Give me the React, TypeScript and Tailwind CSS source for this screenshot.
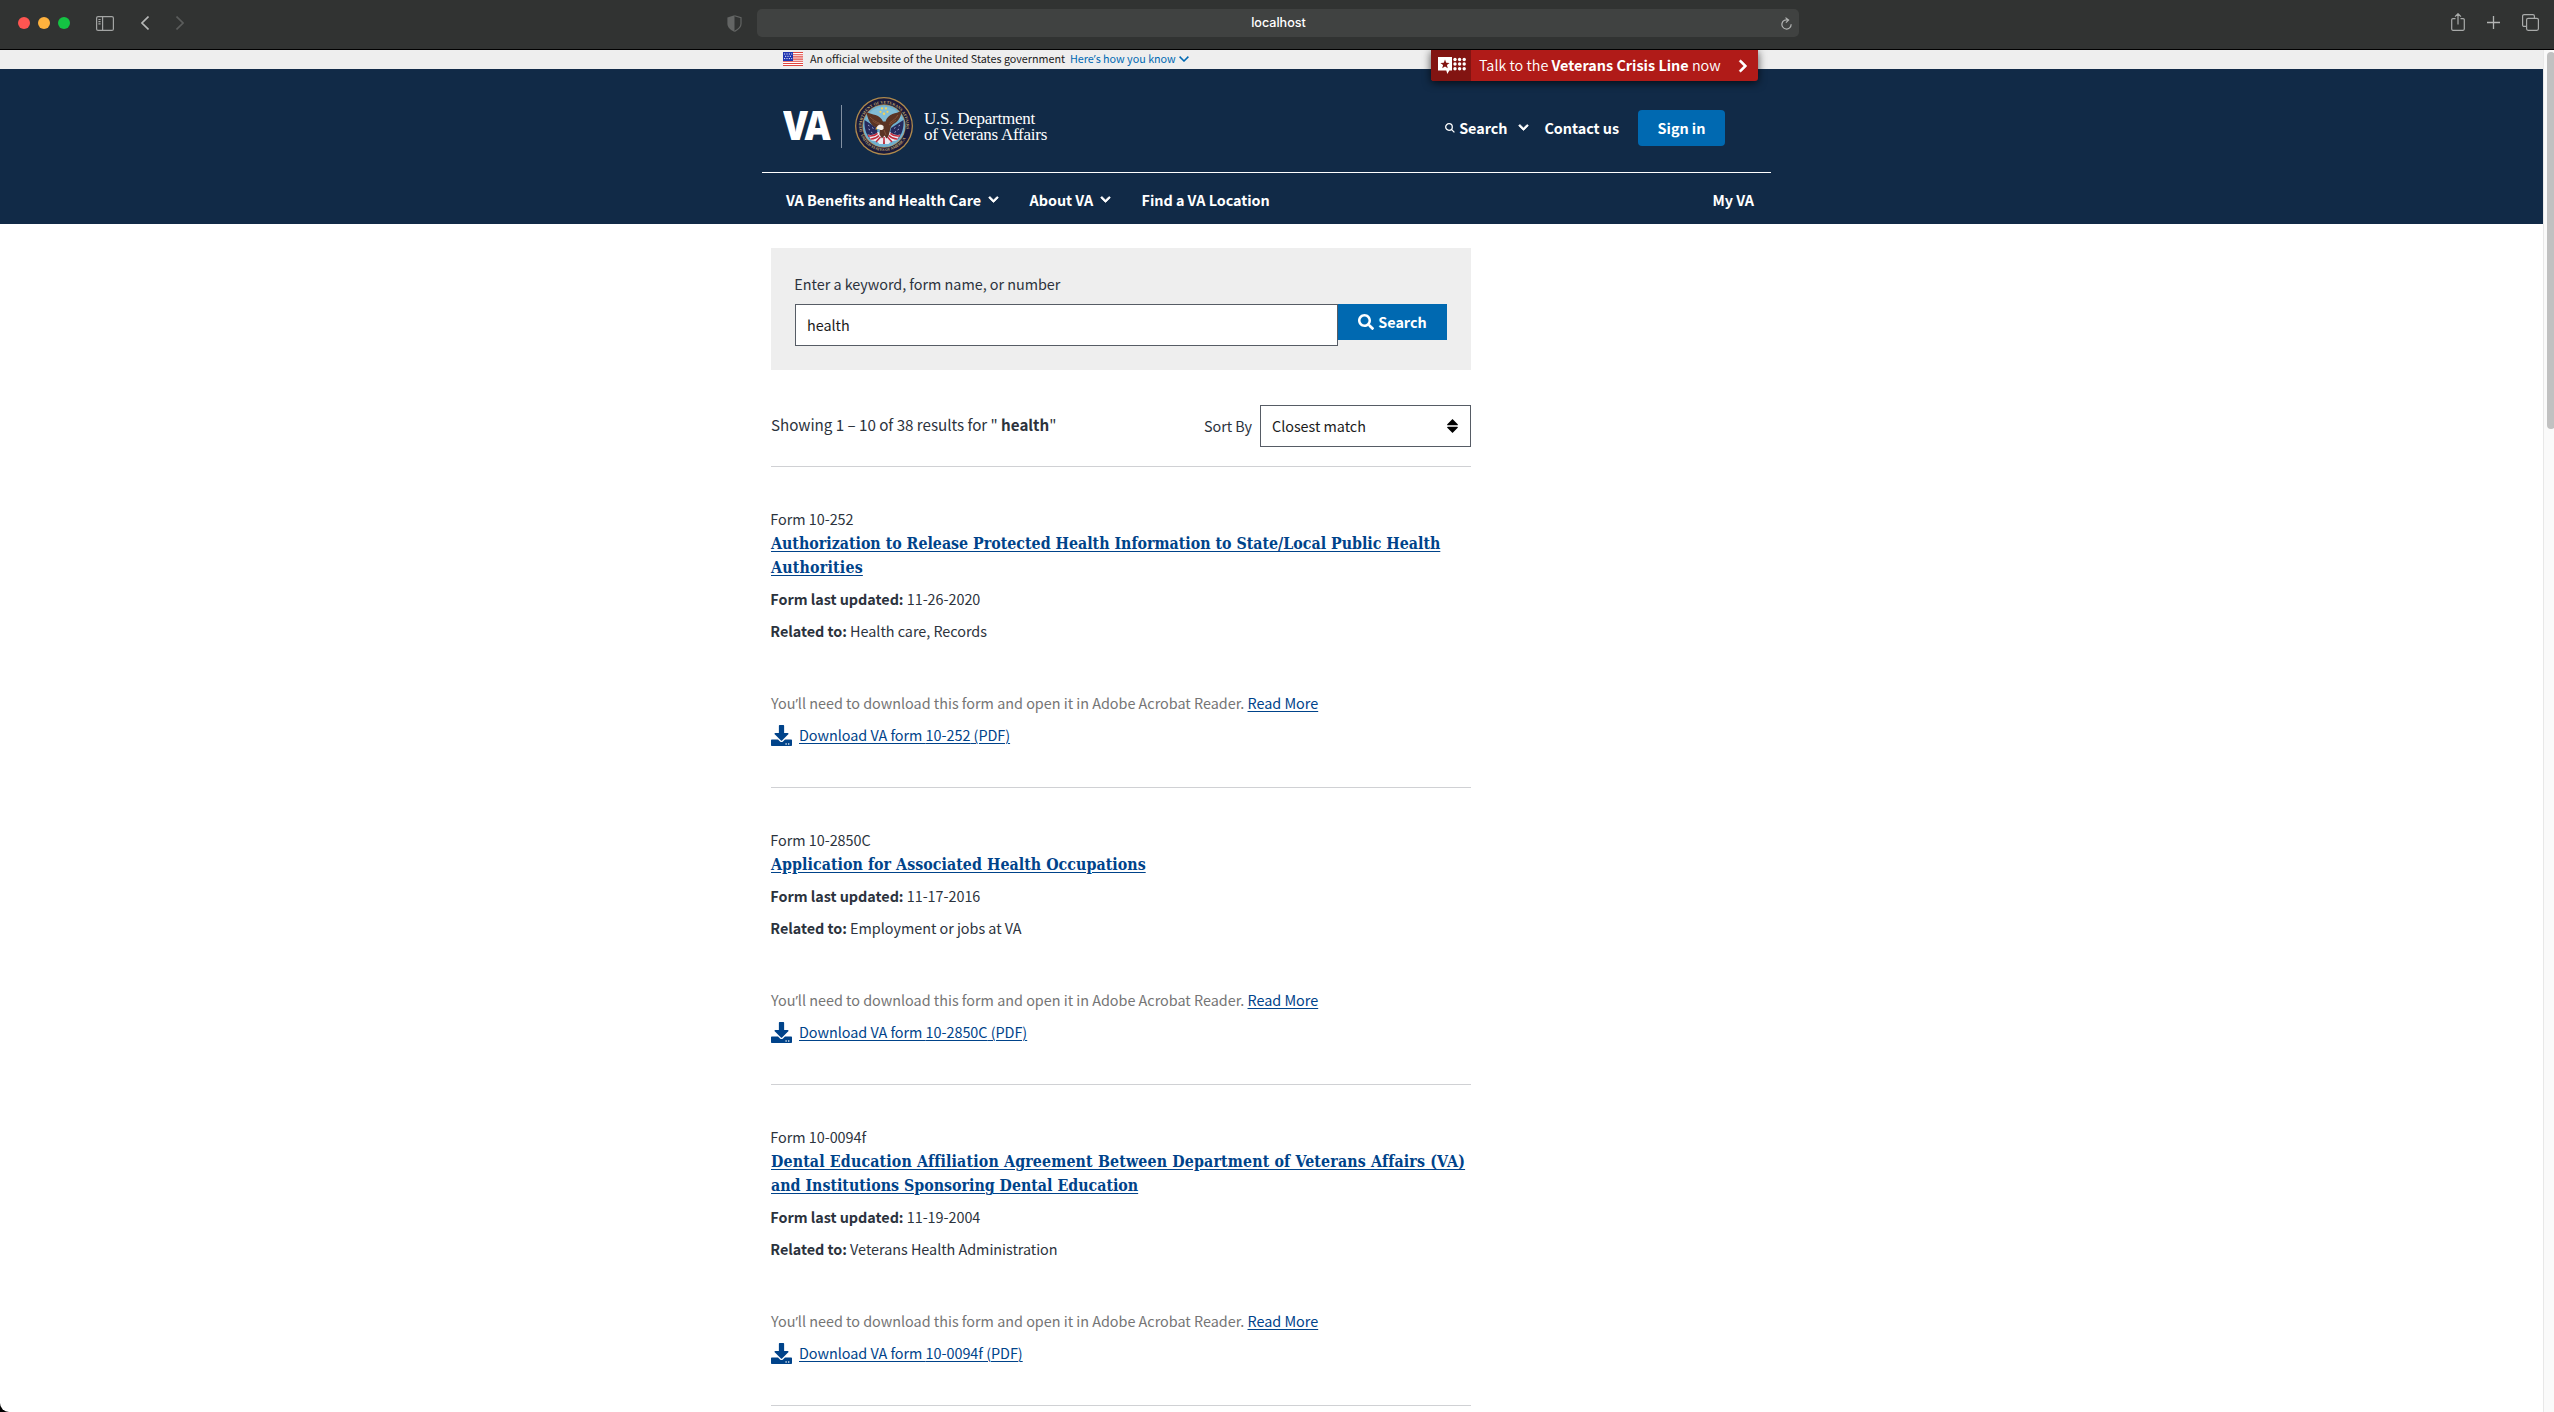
import type { ReactNode } from "react";
import { FaChevronDown, FaChevronRight, FaDownload, FaSearch } from "react-icons/fa";

type FormResult = {
  id: string;
  title: { text: string; tracking: string }[];
  updated: string;
  related: string;
};

const RESULTS: FormResult[] = [
  {
    id: "10-252",
    title: [
      {
        text: "Authorization to Release Protected Health Information to State/Local Public Health",
        tracking: "tracking-normal",
      },
      { text: "Authorities", tracking: "tracking-[0.2px]" },
    ],
    updated: "11-26-2020",
    related: "Health care, Records",
  },
  {
    id: "10-2850C",
    title: [{ text: "Application for Associated Health Occupations", tracking: "tracking-[0.05px]" }],
    updated: "11-17-2016",
    related: "Employment or jobs at VA",
  },
  {
    id: "10-0094f",
    title: [
      {
        text: "Dental Education Affiliation Agreement Between Department of Veterans Affairs (VA)",
        tracking: "tracking-[0.15px]",
      },
      { text: "and Institutions Sponsoring Dental Education", tracking: "tracking-normal" },
    ],
    updated: "11-19-2004",
    related: "Veterans Health Administration",
  },
];

/* The CJK face draws a full-width apostrophe, so it is taken from another family. */
function Apostrophe() {
  return <span className="leading-none [font-family:'Open_Sans',sans-serif]">’</span>;
}

function BrowserBar() {
  return (
    <div className="flex h-[50px] shrink-0 items-start border-b border-black bg-[#313332]">
      <div className="flex w-[757px] items-center pt-[9px] pl-[18px]">
        <div className="flex h-7 items-center gap-2">
          <span className="size-3 rounded-full bg-[#ff5551]" />
          <span className="size-3 rounded-full bg-[#ffb23e]" />
          <span className="size-3 rounded-full bg-[#14c343]" />
        </div>
        <svg className="ml-[26px] h-[15px] w-[18px]" viewBox="0 0 18 15" fill="none" stroke="#a3a5a4" strokeWidth="1.2">
          <rect x="0.6" y="0.6" width="16.8" height="13.8" rx="1.5" />
          <path d="M6.6 0.6v13.8M2.4 3.5h2.2M2.4 5.7h2.2M2.4 7.9h2.2" />
        </svg>
        <svg className="ml-[27px] h-[14px] w-2" viewBox="0 0 8 14" fill="none" stroke="#b6b8b7" strokeWidth="1.6">
          <path d="M7.5 0.5 1 7l6.5 6.5" />
        </svg>
        <svg className="ml-[27px] h-[14px] w-2" viewBox="0 0 8 14" fill="none" stroke="#5b5d5c" strokeWidth="1.6">
          <path d="M0.5 0.5 7 7 0.5 13.5" />
        </svg>
        <svg className="mr-[15px] ml-auto h-[17px] w-[15px]" viewBox="0 0 15 17" fill="none">
          <path d="M7.5.8 14 2.8v6c0 3-2.5 5.6-6.5 7.6" stroke="#636564" strokeWidth="1.2" />
          <path d="M7.5.2.4 2.5v6.3c0 3.3 2.6 6 7.1 8.1z" fill="#636564" />
        </svg>
      </div>
      <div className="mt-[9px] flex h-7 w-[1042px] items-center rounded-[5px] bg-[#404241] pr-[7px]">
        <span className="flex-1 pl-[19px] text-center text-[12.6px] font-medium text-white [font-family:Inter,sans-serif]">localhost</span>
        <svg className="h-[13px] w-[11px]" viewBox="0 0 11 13" fill="none" stroke="#b3b5b4" strokeWidth="1.2">
          <path d="M7.3 3.2A4.6 4.6 0 1 0 10.1 7.3M4.5.6 7.6 3.1 4.9 5.6" />
        </svg>
      </div>
      <div className="ml-auto flex items-center pt-[13px] pr-[15px]">
        <svg className="h-[18px] w-[14px]" viewBox="0 0 14 18" fill="none" stroke="#a9abaa" strokeWidth="1.2">
          <path d="M4.5 5.6H1.9a1.2 1.2 0 0 0-1.2 1.2v9.3a1.2 1.2 0 0 0 1.2 1.2h10.2a1.2 1.2 0 0 0 1.2-1.2V6.8a1.2 1.2 0 0 0-1.2-1.2H9.5M7 11.5V.9M4 3.6 7 .7l3 2.9" />
        </svg>
        <svg className="ml-[22px] size-[13px]" viewBox="0 0 13 13" stroke="#b3b5b4" strokeWidth="1.3">
          <path d="M6.5 0v13M0 6.5h13" />
        </svg>
        <svg className="ml-[22px] h-[17px] w-[17px]" viewBox="0 0 17 17" fill="none" stroke="#a9abaa" strokeWidth="1.2">
          <rect x="4.6" y="4.3" width="11.8" height="12" rx="1.5" />
          <path d="M4.3 12.4H2.1A1.5 1.5 0 0 1 .6 10.9V2.1A1.5 1.5 0 0 1 2.1.6h8.8a1.5 1.5 0 0 1 1.5 1.5v1.8" />
        </svg>
      </div>
    </div>
  );
}

function Flag() {
  return (
    <svg className="h-[14px] w-5" viewBox="0 0 20 14">
      <rect width="20" height="14" fill="#fff" />
      <path d="M0 .5h20M0 2.7h20M0 4.9h20M0 7.1h20M0 9.3h20M0 11.5h20M0 13.5h20" stroke="#e0463f" strokeWidth="1.1" />
      <rect width="10" height="9" fill="#1e33b1" />
      <path d="M1 2h1.2m1.2 0h1.2m1.2 0h1.2m1.2 0h1M2 4.3h1.2m1.2 0h1.2m1.2 0h1.2M1 6.6h1.2m1.2 0h1.2m1.2 0h1.2m1.2 0h1" stroke="#fff" strokeWidth="0.9" />
    </svg>
  );
}

function Seal() {
  return (
    <svg className="size-[58px]" viewBox="0 0 58 58">
      <defs>
        <path id="ring-top" d="M7.3 34.5A22.4 22.4 0 1 1 50.7 34.5" />
        <path id="ring-bottom" d="M5.7 38A25 25 0 0 0 52.3 38" />
      </defs>
      <circle cx="29" cy="29" r="29" fill="#b08a4c" />
      <circle cx="29" cy="29" r="27.7" fill="#191a3c" />
      <g fill="#c9ac6c" fontSize="4" fontWeight="700" className="[font-family:'Liberation_Serif',serif]">
        <text textLength="79">
          <textPath href="#ring-top">DEPARTMENT OF VETERANS AFFAIRS</textPath>
        </text>
        <text textLength="56">
          <textPath href="#ring-bottom">UNITED STATES OF AMERICA</textPath>
        </text>
      </g>
      <circle cx="29" cy="29" r="21.7" fill="#b08a4c" />
      <circle cx="29" cy="29" r="21" fill="#6fb0cf" />
      <path d="M29 9.5a20 20 0 0 1 18 12L29 30 11 21.5a20 20 0 0 1 18-12z" fill="#82bdd6" />
      <g fill="#f2d35c">
        <circle cx="29" cy="16.8" r="1.2" />
        <circle cx="25.5" cy="14.8" r="1.1" />
        <circle cx="32.5" cy="14.8" r="1.1" />
        <circle cx="27" cy="11.4" r="1.1" />
        <circle cx="31" cy="11.4" r="1.1" />
      </g>
      <path d="M9.5 23 22 31l1 11-8 0c-4-5-6-11-5.5-19zM48.5 23 36 31l-2 11 9 0c4-5 6-11 5.5-19z" fill="#262a5c" />
      <path d="M13 28l1.5 1M13.5 32l1.5 1M16 35l1.5 1M45 28l-1.5 1M44 32l-1.5 1M41 34.5l-1.5 1M17 30.5l1.5 1M40.5 30.5l-1.5 1" stroke="#b4bcdc" strokeWidth="0.8" />
      <path d="M12.5 37.5c4 1 8 0 10.5-2.5l6 3 6-3c3 2.5 7 3.5 10.5 2.5l-4 6c-3 0-6 .5-8 3.5h-9c-2-3-5-3.5-8-3.5z" fill="#eceaf0" />
      <path d="M13 38.8c4 .8 7 0 9.5-2.4M15.5 42c4 .4 6-1 8.5-3.5M21 45l4.5-5M45 38.8c-4 .8-7 0-9.5-2.4M42.5 42c-4 .4-6-1-8.5-3.5M37 45l-4.5-5M29 40v7" stroke="#c32b3c" strokeWidth="1.5" fill="none" />
      <path d="M28 47l1-5 1 5z" fill="#b8323c" />
      <path d="M11.5 15.5c3 .5 6 2 9 2.5 3.5 1 6 3.5 7.5 6.500h2.500c1-3.500 3.500-6 7-7.500 3-1 6-1.500 9-3.500 0 6-3 11-8 13.500-2 1.500-3 3-3.500 6l-1.500 6-2 2.500-2-3-2.500 3-2.500-4 .5-5-3-1.500c-5.500-2-9-7-10.500-15.500z" fill="#5b3424" />
      <path d="M15 20c3 3 6 5 10 6.500M17.500 24c2.500 2 5 3 8 3.500M43 18c-2 3.500-5 5.500-8.500 8M41 23c-2 2-4 3-7 5M29 33l2 5" stroke="#87543a" strokeWidth="0.9" fill="none" />
      <path d="M28.500 29c-1.700-1.700-4.600-1.800-6 0-.7.9-1.300 1.800-1.100 2.900l2.200.1c1.500 1.500 3.900 1.100 5-.3z" fill="#f4f1ec" />
      <path d="M21.900 30.200l-1.900 2 2.200.2z" fill="#e8b53a" />
    </svg>
  );
}

function CrisisLine() {
  return (
    <a className="absolute top-0 left-[1431px] flex h-[31px] w-[327px] items-center overflow-hidden rounded-b-[3px] bg-[#b01b18] text-[14.4px] leading-5 whitespace-nowrap text-white shadow-[0_2px_8px_rgba(0,0,0,0.7)]">
      <span className="flex h-full w-10 shrink-0 items-center bg-[#821412] pl-[7px]">
        <svg className="h-[17px] w-[28px]" viewBox="0 0 28 17" fill="#fff">
          <path d="M0 0h14v13.5h-2.7L9.3 17l-1-3.5H0z" />
          <path d="m7 2.6 1.2 3.2 3.4.1-2.7 2.1.9 3.3L7 9.4l-2.8 1.9.9-3.3-2.7-2.1 3.4-.1z" fill="#821412" />
          {[2.5, 7, 11.7].map((y) => [17, 21.6, 26.2].map((x) => <circle key={`${x}-${y}`} cx={x} cy={y} r="1.7" />))}
        </svg>
      </span>
      <span className="-mt-0.5 ml-2 font-[350]">
        Talk to the <b className="font-bold">Veterans Crisis Line</b> now
      </span>
      <FaChevronRight className="mr-[8px] ml-auto size-[14px] stroke-white stroke-[24]" />
    </a>
  );
}

function NavItem({ children, menu }: { children: ReactNode; menu?: boolean }) {
  return (
    <a className="flex items-center gap-[7px]">
      {children}
      {menu && <FaChevronDown className="size-[11px] stroke-white stroke-[36]" />}
    </a>
  );
}

function Header() {
  return (
    <header>
      <div className="relative h-[19px] bg-[#eeeeee] pl-[783px]">
        <div className="flex h-[17px] items-center text-[10.75px] leading-4 whitespace-nowrap text-[#212121]">
          <Flag />
          <span className="ml-[7px]">An official website of the United States government</span>
          <a className="ml-[5px] flex items-center text-[#0069b2]">
            <span>
              Here
              <Apostrophe />s how you know
            </span>
            <svg className="ml-[3px] h-[6px] w-[10px]" viewBox="0 0 10 6" fill="none" stroke="#0069b2" strokeWidth="1.5">
              <path d="m.6.6 4.4 4.4L9.4.6" />
            </svg>
          </a>
        </div>
        <CrisisLine />
      </div>
      <div className="h-[155px] bg-[#112a47] pl-[762px] text-[14.4px] leading-5 font-bold tracking-[-0.04px] whitespace-nowrap text-white">
        <div className="flex h-[104px] w-[1009px] items-start border-b border-white">
          <a className="mt-7 ml-[21px] flex h-[58px] items-center">
            <span className="mb-1 inline-block w-[47px] origin-left scale-x-[0.88] text-[41px] leading-[58px] font-extrabold tracking-[-4px] [font-family:'Open_Sans',sans-serif]">
              VA
            </span>
            <span className="ml-[11px] h-[43px] w-px bg-[#8391a3]" />
            <span className="ml-[13px]">
              <Seal />
            </span>
            <span className="ml-[11px] pt-[2px] text-[17px] leading-4 font-normal tracking-[-0.25px] [font-family:'Liberation_Serif',serif]">
              U.S. Department
              <br />
              of Veterans Affairs
            </span>
          </a>
          <div className="mt-[41px] mr-[46px] ml-auto flex h-9 items-center">
            <svg className="mt-[13px] h-[10px] w-[10px] self-start" viewBox="0 0 10 10" fill="none" stroke="#fff" strokeWidth="1.3">
              <circle cx="4" cy="4" r="3.3" />
              <path d="m6.4 6.4 3 3" />
            </svg>
            <span className="ml-1">Search</span>
            <FaChevronDown className="mt-[-1px] ml-[11px] size-[11px] stroke-white stroke-[36]" />
            <a className="ml-[15px]">Contact us</a>
            <a className="ml-[19px] flex h-9 w-[87px] items-center justify-center rounded-[4px] bg-[#0069b1]">Sign in</a>
          </div>
        </div>
        <nav className="flex h-[51px] w-[1009px] items-center pt-0.5 pr-[17px] pl-6">
          <NavItem menu>VA Benefits and Health Care</NavItem>
          <span className="w-[30.5px]" />
          <NavItem menu>About VA</NavItem>
          <span className="w-[30.5px]" />
          <NavItem>Find a VA Location</NavItem>
          <span className="ml-auto">
            <NavItem>My VA</NavItem>
          </span>
        </nav>
      </div>
    </header>
  );
}

function SearchForm() {
  return (
    <form className="h-[122px] bg-[#eeeeee] px-6 pt-[26px]">
      <label className="ml-[-0.7px] block text-[14.4px] leading-5">Enter a keyword, form name, or number</label>
      <div className="mt-[10px] flex items-start">
        <div className="flex h-[42px] w-[543px] items-center border border-[#565c65] bg-white pl-[11px] text-[14.4px] leading-5 text-[#1b1b1b]">
          health
        </div>
        <button type="button" className="flex h-9 w-[109px] items-center justify-center gap-1 bg-[#0069b1] text-[14.4px] leading-5 font-bold text-white">
          <FaSearch className="size-4" />
          Search
        </button>
      </div>
    </form>
  );
}

function ResultsBar() {
  return (
    <div className="mt-[35px] flex h-[42px] items-center">
      <p className="mt-[-4px] text-[15.2px] leading-5 whitespace-pre">
        Showing 1 – 10 of 38 results for " <b className="font-bold">health</b>"
      </p>
      <span className="ml-auto text-[14.4px] leading-5">Sort By</span>
      <div className="ml-2 flex h-full w-[211px] items-center border border-[#565c65] pr-[12px] pl-[11px] text-[14.4px] leading-5 text-[#1b1b1b]">
        Closest match
        <svg className="ml-auto h-[14px] w-[11px]" viewBox="0 0 11 14" fill="#000">
          <path d="M5.5 0 10.7 5.3c.4.4.1 1-.5 1H.8c-.6 0-.9-.6-.5-1zM5.5 14 10.7 8.7c.4-.4.1-1-.5-1H.8c-.6 0-.9.6-.5 1z" />
        </svg>
      </div>
    </div>
  );
}

function Result({ form }: { form: FormResult }) {
  const link = "text-[#00438a] underline decoration-1 underline-offset-2";
  return (
    <li className="border-b border-[#d0d1d4] py-10">
      <p className="ml-[-0.7px]">Form {form.id}</p>
      <h3
        className={`${link} pt-px text-[15.8px] font-bold [font-family:'DejaVu_Serif_Condensed','DejaVu_Serif',serif] [font-stretch:condensed]`}
      >
        {form.title.map((line) => (
          <span key={line.text} className={`block ${line.tracking}`}>
            {line.text}
          </span>
        ))}
      </h3>
      <p className="mt-[7px] ml-[-0.7px]">
        <b className="font-bold">Form last updated:</b> {form.updated}
      </p>
      <p className="mt-2 ml-[-0.7px]">
        <b className="font-bold">Related to:</b> {form.related}
      </p>
      <p className="mt-12 h-6 tracking-[-0.01px] text-[#757575]">
        You
        <Apostrophe />
        ll need to download this form and open it in Adobe Acrobat Reader. <a className={link}>Read More</a>
      </p>
      <p className="mt-2 flex h-6 items-center">
        <FaDownload className="size-[21px] text-[#00438a]" />
        <a className={`ml-[7px] ${link}`}>Download VA form {form.id} (PDF)</a>
      </p>
    </li>
  );
}

export default function App() {
  return (
    <div className="h-[1412px] w-[2554px] overflow-hidden bg-black">
      <div className="flex h-full flex-col overflow-hidden rounded-bl-[9px] bg-white [font-family:'Noto_Sans_CJK_SC','Noto_Sans',sans-serif]">
        <BrowserBar />
        <div className="flex min-h-0 flex-1">
          <div className="w-[2543px] overflow-hidden">
            <Header />
            <main className="ml-[771px] w-[700px] pt-6 tracking-[-0.03px] text-[#2c333d]">
              <SearchForm />
              <ResultsBar />
              <ul className="mt-[19px] border-t border-[#d0d1d4] text-[14.4px] leading-6 whitespace-nowrap">
                {RESULTS.map((form) => (
                  <Result key={form.id} form={form} />
                ))}
              </ul>
            </main>
          </div>
          <div className="w-[11px] border-l border-[#e8e8e8] bg-[#fafafa] pt-0.5 pl-[3px]">
            <div className="h-[377px] w-2 rounded-full bg-[#c1c1c1]" />
          </div>
        </div>
      </div>
    </div>
  );
}
